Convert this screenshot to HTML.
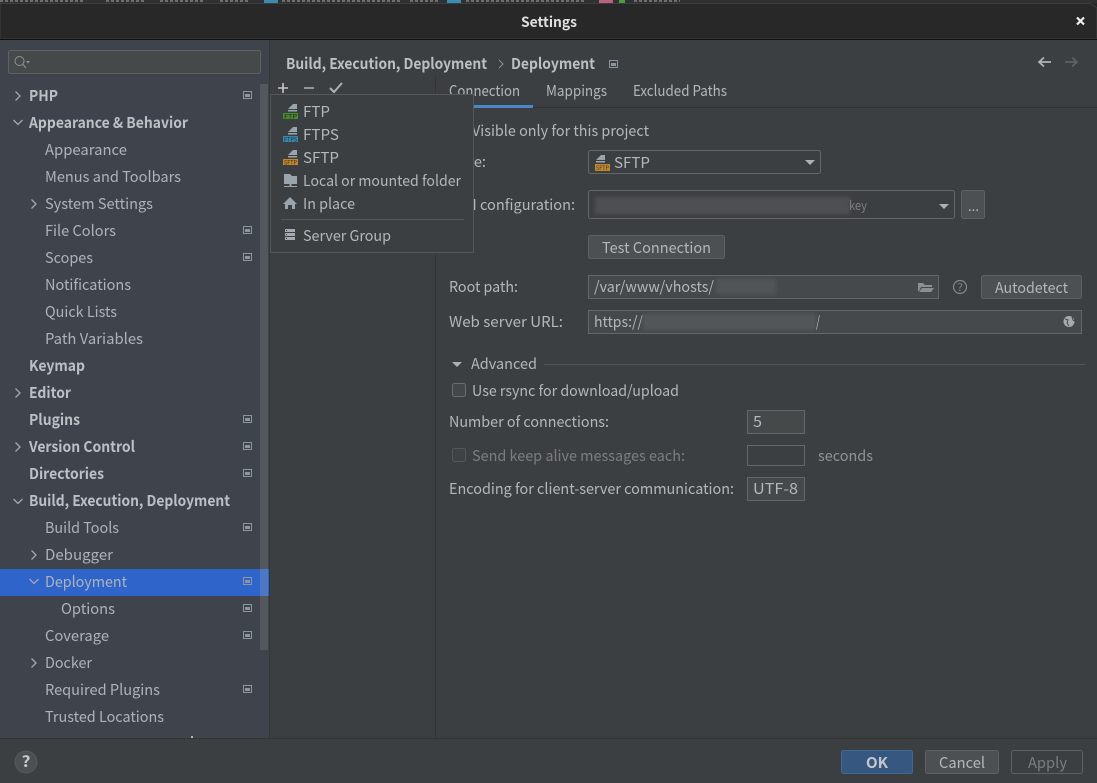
<!DOCTYPE html>
<html><head><meta charset="utf-8"><title>Settings</title>
<style>
html,body{margin:0;padding:0;background:#3c3f41;width:1097px;height:783px;overflow:hidden}
svg{display:block}
text{font-family:"Noto Sans CJK JP","Liberation Sans",sans-serif;font-size:15px;fill:#b4b7ba}
.b{font-weight:700;fill:#bcc0c5}
.d{fill:#7b7e81}
.s{fill:#adb3ba}
</style></head><body>
<svg width="1097" height="783" viewBox="0 0 1097 783" xmlns="http://www.w3.org/2000/svg">
<defs>
<filter id="bl" x="-10%" y="-40%" width="120%" height="180%"><feGaussianBlur stdDeviation="1.8"/></filter>
<g id="pi"><rect x="0.5" y="0.5" width="8" height="7" fill="none" stroke="#8c96a0"/><rect x="2" y="3" width="5" height="3" fill="#8c96a0"/></g>
<path id="cr" d="M-2.5 -4.5L2 0L-2.5 4.5" fill="none" stroke="#a4a9ae" stroke-width="1.3"/>
<path id="cd" d="M-4.5 -2L0 2.5L4.5 -2" fill="none" stroke="#a4a9ae" stroke-width="1.3"/>
<path id="srv" d="M10 8L15 3H19V8ZM10 9H19V10.500H10Z" fill="#9aa4ad"/>
</defs>

<rect width="1097" height="783" fill="#3c3f41"/>
<!-- title -->
<rect width="1097" height="39" fill="#282828"/>
<rect x="0" y="0" width="1097" height="3" fill="#2f3133"/>
<g stroke="#86837c" stroke-width="2" stroke-dasharray="3 2" opacity=".75" fill="none"><path d="M0 1H85M106 1H146M160 1H205M220 1H250M282 1H402M410 1H440M466 1H584M634 1H680"/></g>
<rect x="264" y="0" width="14" height="3" fill="#3d8ab0"/><rect x="447" y="0" width="14" height="3" fill="#3d8ab0"/><rect x="599" y="0" width="14" height="3" fill="#b9637c"/><rect x="619" y="0" width="6" height="3" fill="#4f9a45"/>
<path d="M0 3.500H1090L1097 8V39H0Z" fill="#282828" stroke="#3e3e3e" stroke-width="1"/>
<rect y="39" width="1097" height="1" fill="#0f0f0f"/>
<text class="b" x="521" y="27" textLength="56" lengthAdjust="spacingAndGlyphs" style="fill:#e0e0e0;font-size:14px">Settings</text>
<path d="M1077 17.500L1084 24.500M1084 17.500L1077 24.500" stroke="#f0f0f0" stroke-width="2.200"/>

<!-- sidebar -->
<rect x="0" y="40" width="269" height="698" fill="#3f444c"/>
<rect x="269" y="40" width="1" height="698" fill="#34373a"/>
<rect x="8.500" y="50.500" width="252" height="23" rx="2" fill="#45494a" stroke="#5f6264"/>
<circle cx="19.500" cy="61" r="4.500" fill="none" stroke="#8d9298" stroke-width="1"/>
<path d="M23 64.500L26 68" stroke="#8d9298" stroke-width="1.200"/><path d="M26 61H30L28 63.500Z" fill="#8d9298"/>
<rect x="260" y="84" width="8" height="566" fill="#53585f"/>
<rect x="0" y="569" width="269" height="27" fill="#2f65ca"/>
<rect x="260" y="569" width="8" height="27" fill="#4e77c4"/>

<g transform="translate(0,1)">
<text class="b" x="29" y="100" textLength="29" lengthAdjust="spacingAndGlyphs">PHP</text>
<text class="b" x="29" y="127" textLength="159" lengthAdjust="spacingAndGlyphs">Appearance &amp; Behavior</text>
<text class="s" x="45" y="154" textLength="82" lengthAdjust="spacingAndGlyphs">Appearance</text>
<text class="s" x="45" y="181" textLength="136" lengthAdjust="spacingAndGlyphs">Menus and Toolbars</text>
<text class="s" x="45" y="208" textLength="108" lengthAdjust="spacingAndGlyphs">System Settings</text>
<text class="s" x="45" y="235" textLength="71" lengthAdjust="spacingAndGlyphs">File Colors</text>
<text class="s" x="45" y="262" textLength="48" lengthAdjust="spacingAndGlyphs">Scopes</text>
<text class="s" x="45" y="289" textLength="86" lengthAdjust="spacingAndGlyphs">Notifications</text>
<text class="s" x="45" y="316" textLength="72" lengthAdjust="spacingAndGlyphs">Quick Lists</text>
<text class="s" x="45" y="343" textLength="98" lengthAdjust="spacingAndGlyphs">Path Variables</text>
<text class="b" x="29" y="370" textLength="56" lengthAdjust="spacingAndGlyphs">Keymap</text>
<text class="b" x="29" y="397" textLength="42" lengthAdjust="spacingAndGlyphs">Editor</text>
<text class="b" x="29" y="424" textLength="51" lengthAdjust="spacingAndGlyphs">Plugins</text>
<text class="b" x="29" y="451" textLength="106" lengthAdjust="spacingAndGlyphs">Version Control</text>
<text class="b" x="29" y="478" textLength="75" lengthAdjust="spacingAndGlyphs">Directories</text>
<text class="b" x="29" y="505" textLength="201" lengthAdjust="spacingAndGlyphs">Build, Execution, Deployment</text>
<text class="s" x="45" y="532" textLength="74" lengthAdjust="spacingAndGlyphs">Build Tools</text>
<text class="s" x="45" y="559" textLength="68" lengthAdjust="spacingAndGlyphs">Debugger</text>
<text class="s" x="45" y="586" textLength="82" lengthAdjust="spacingAndGlyphs">Deployment</text>
<text class="s" x="61" y="613" textLength="54" lengthAdjust="spacingAndGlyphs">Options</text>
<text class="s" x="45" y="640" textLength="64" lengthAdjust="spacingAndGlyphs">Coverage</text>
<text class="s" x="45" y="667" textLength="47" lengthAdjust="spacingAndGlyphs">Docker</text>
<text class="s" x="45" y="694" textLength="115" lengthAdjust="spacingAndGlyphs">Required Plugins</text>
<text class="s" x="45" y="721" textLength="119" lengthAdjust="spacingAndGlyphs">Trusted Locations</text>
</g>
<rect x="191" y="736" width="2" height="2" fill="#b4b7ba"/>

<use href="#cr" x="18" y="96"/><use href="#cd" x="18" y="122"/><use href="#cr" x="34" y="204"/>
<use href="#cr" x="18" y="393"/><use href="#cr" x="18" y="447"/><use href="#cd" x="18" y="501"/>
<use href="#cr" x="34" y="555"/><use href="#cd" x="34" y="581"/><use href="#cr" x="34" y="663"/>
<g><use href="#pi" x="243" y="91"/><use href="#pi" x="243" y="226"/><use href="#pi" x="243" y="253"/><use href="#pi" x="243" y="415"/><use href="#pi" x="243" y="442"/><use href="#pi" x="243" y="469"/><use href="#pi" x="243" y="523"/><use href="#pi" x="243" y="577"/><use href="#pi" x="243" y="604"/><use href="#pi" x="243" y="631"/><use href="#pi" x="243" y="685"/></g>

<!-- header -->
<text class="b" x="286" y="69" textLength="201" lengthAdjust="spacingAndGlyphs">Build, Execution, Deployment</text>
<path d="M499 60L503 64L499 68" fill="none" stroke="#8e9194" stroke-width="1"/>
<text class="b" x="511" y="69" textLength="84" lengthAdjust="spacingAndGlyphs">Deployment</text>
<use href="#pi" x="609" y="60"/>
<path d="M1051 62H1039M1044 57.500L1039 62L1044 66.500" fill="none" stroke="#b0b3b6" stroke-width="1.800"/>
<path d="M1065 62H1077M1072 57.500L1077 62L1072 66.500" fill="none" stroke="#5e6163" stroke-width="1.800"/>

<!-- toolbar -->
<path d="M283 83V93M278 88H288" stroke="#c4c6c8" stroke-width="1.600"/>
<path d="M304 88H314" stroke="#a9acaf" stroke-width="1.600"/>
<path d="M330 88L334 92L342 83" fill="none" stroke="#aeb1b4" stroke-width="2"/>
<rect x="435" y="76" width="1" height="662" fill="#333537"/>

<!-- tabs -->
<text x="449" y="96" textLength="71" lengthAdjust="spacingAndGlyphs">Connection</text>
<text x="546" y="96" textLength="61" lengthAdjust="spacingAndGlyphs">Mappings</text>
<text x="633" y="96" textLength="94" lengthAdjust="spacingAndGlyphs">Excluded Paths</text>
<rect x="436" y="107" width="661" height="1" fill="#323537"/>
<rect x="436" y="105" width="97" height="3" fill="#4a88c7"/>

<!-- form -->
<text x="472" y="136" textLength="177" lengthAdjust="spacingAndGlyphs">Visible only for this project</text>
<text x="449" y="167" textLength="37" lengthAdjust="spacingAndGlyphs">Type:</text>
<rect x="588.500" y="150.500" width="232" height="23" rx="2" fill="#3c3f41" stroke="#646668"/>
<use href="#srv" x="586" y="152"/>
<rect x="595" y="164" width="15" height="7" fill="#c2872c"/>
<text x="596" y="170" textLength="13" lengthAdjust="spacingAndGlyphs" style="font-size:6px;fill:#3c3f41">SFTP</text>
<text x="614" y="168" textLength="36" lengthAdjust="spacingAndGlyphs">SFTP</text>
<path d="M805 160H815L810 165Z" fill="#aeb1b4"/>

<text x="449" y="210" textLength="126" lengthAdjust="spacingAndGlyphs">SSH configuration:</text>
<rect x="588.500" y="190.500" width="366" height="28" rx="2" fill="#3c3f41" stroke="#646668"/>
<rect x="595" y="197" width="255" height="17" fill="#4e5052" filter="url(#bl)"/>
<text class="d" x="849" y="210" textLength="18" lengthAdjust="spacingAndGlyphs" style="font-size:13px">key</text>
<path d="M939 204H949L944 209Z" fill="#aeb1b4"/>
<rect x="961.500" y="190.500" width="23" height="28" rx="2" fill="#4c5052" stroke="#5e6163"/>
<text x="968" y="211" textLength="11" lengthAdjust="spacingAndGlyphs" style="font-size:13px">...</text>

<rect x="588.500" y="235.500" width="136" height="23" rx="2" fill="#4c5052" stroke="#5e6163"/>
<text x="602" y="253" textLength="109" lengthAdjust="spacingAndGlyphs">Test Connection</text>

<text x="449" y="292" textLength="69" lengthAdjust="spacingAndGlyphs">Root path:</text>
<rect x="588.500" y="275.500" width="350" height="23" fill="#45494a" stroke="#646668"/>
<text x="594" y="292" textLength="120" lengthAdjust="spacingAndGlyphs">/var/www/vhosts/</text>
<rect x="716" y="279" width="60" height="15" fill="#515456" filter="url(#bl)"/>
<path d="M918 291V283H923L925 285H932V287H921L919 291ZM919 292L922 288H934L931 292Z" fill="#8b8f92"/>
<circle cx="960" cy="287" r="6.500" fill="none" stroke="#85888b" stroke-width="1.200"/>
<text x="957" y="291" textLength="6" lengthAdjust="spacingAndGlyphs" style="font-size:10px;fill:#85888b">?</text>
<rect x="981.500" y="275.500" width="100" height="23" rx="2" fill="#4c5052" stroke="#5e6163"/>
<text x="995" y="293" textLength="73" lengthAdjust="spacingAndGlyphs">Autodetect</text>

<text x="449" y="327" textLength="114" lengthAdjust="spacingAndGlyphs">Web server URL:</text>
<rect x="588.500" y="310.500" width="493" height="23" fill="#45494a" stroke="#646668"/>
<text x="594" y="327" textLength="49" lengthAdjust="spacingAndGlyphs">https://</text>
<rect x="643" y="314" width="173" height="16" fill="#535658" filter="url(#bl)"/>
<text x="816" y="327" textLength="4" lengthAdjust="spacingAndGlyphs">/</text>
<circle cx="1069" cy="321.500" r="5.500" fill="#a7aaad"/>
<path d="M1065 319L1068 320L1067 323L1069 326M1072 317L1073 320L1075 321" fill="none" stroke="#45494a" stroke-width="1"/>

<path d="M452 362H462L457 367Z" fill="#aeb1b4"/>
<text x="471" y="369" textLength="66" lengthAdjust="spacingAndGlyphs">Advanced</text>
<rect x="544" y="364" width="541" height="1" fill="#54575a"/>
<rect x="452.500" y="383.500" width="13" height="13" rx="2" fill="#43474a" stroke="#6a6d70"/>
<text x="472" y="396" textLength="207" lengthAdjust="spacingAndGlyphs">Use rsync for download/upload</text>
<text x="449" y="427" textLength="160" lengthAdjust="spacingAndGlyphs">Number of connections:</text>
<rect x="747.500" y="410.500" width="57" height="23" fill="#45494a" stroke="#646668"/>
<text x="753" y="427" textLength="9" lengthAdjust="spacingAndGlyphs">5</text>
<rect x="452.500" y="448.500" width="13" height="13" rx="2" fill="#3f4244" stroke="#55585a"/>
<text class="d" x="472" y="461" textLength="213" lengthAdjust="spacingAndGlyphs">Send keep alive messages each:</text>
<rect x="747.500" y="445.500" width="57" height="20" fill="#3c3f41" stroke="#646668"/>
<text class="d" style="fill:#909396" x="818" y="461" textLength="55" lengthAdjust="spacingAndGlyphs">seconds</text>
<text x="449" y="494" textLength="285" lengthAdjust="spacingAndGlyphs">Encoding for client-server communication:</text>
<rect x="747.500" y="477.500" width="57" height="23" fill="#45494a" stroke="#646668"/>
<text x="753" y="494" textLength="45" lengthAdjust="spacingAndGlyphs">UTF-8</text>

<!-- popup -->
<rect x="270.500" y="94.500" width="203" height="158" fill="#3c3f41" stroke="#555759"/>
<use href="#srv" x="278" y="101"/><rect x="283" y="113" width="15" height="6" fill="#4a8a2e"/>
<text x="284" y="118.500" textLength="13" lengthAdjust="spacingAndGlyphs" style="font-size:6px;fill:#202a1c">FTP</text>
<use href="#srv" x="278" y="124"/><rect x="283" y="136" width="15" height="6" fill="#3a86a8"/>
<text x="284" y="141.500" textLength="13" lengthAdjust="spacingAndGlyphs" style="font-size:6px;fill:#1d3540">FTPS</text>
<use href="#srv" x="278" y="147"/><rect x="283" y="159" width="15" height="6" fill="#c2872c"/>
<text x="284" y="164.500" textLength="13" lengthAdjust="spacingAndGlyphs" style="font-size:6px;fill:#3c3020">SFTP</text>
<path d="M284 174H290L292 176H297V184H291.500V186H297V187H284V186H289.500V184H284Z" fill="#9aa4ad"/>
<path d="M283 204L290 197L297 204H295V209H292V205H288V209H285V204Z" fill="#9aa4ad"/>
<g fill="#a5abb1"><rect x="285" y="229" width="10" height="3"/><rect x="285" y="233" width="10" height="3"/><rect x="285" y="237" width="10" height="3"/></g>
<g fill="#3c3f41"><rect x="286" y="230" width="1" height="1"/><rect x="286" y="234" width="1" height="1"/><rect x="286" y="238" width="1" height="1"/></g>
<text x="303" y="117" textLength="27" lengthAdjust="spacingAndGlyphs">FTP</text>
<text x="303" y="140" textLength="36" lengthAdjust="spacingAndGlyphs">FTPS</text>
<text x="303" y="163" textLength="36" lengthAdjust="spacingAndGlyphs">SFTP</text>
<text x="303" y="186" textLength="158" lengthAdjust="spacingAndGlyphs">Local or mounted folder</text>
<text x="303" y="209" textLength="52" lengthAdjust="spacingAndGlyphs">In place</text>
<rect x="281" y="219" width="183" height="1" fill="#55585a"/>
<text x="303" y="241" textLength="88" lengthAdjust="spacingAndGlyphs">Server Group</text>

<!-- footer -->
<rect x="0" y="738" width="1097" height="1" fill="#323436"/>
<rect x="0" y="739" width="1097" height="44" fill="#3c3f41"/>
<circle cx="26" cy="762" r="11" fill="#4c5052" stroke="#56595b"/>
<text class="b" x="21.500" y="767" textLength="9" lengthAdjust="spacingAndGlyphs" style="fill:#c8cacc">?</text>
<rect x="841.500" y="750.500" width="71" height="23" rx="2" fill="#365880" stroke="#43688f"/>
<text class="b" x="866" y="768" textLength="22" lengthAdjust="spacingAndGlyphs" style="fill:#c4c8cc">OK</text>
<rect x="925.500" y="750.500" width="73" height="23" rx="2" fill="#4c5052" stroke="#5e6163"/>
<text x="939" y="768" textLength="46" lengthAdjust="spacingAndGlyphs">Cancel</text>
<rect x="1011.500" y="750.500" width="71" height="23" rx="2" fill="#3c3f41" stroke="#5e6163"/>
<text class="d" x="1028" y="768" textLength="39" lengthAdjust="spacingAndGlyphs">Apply</text>
</svg>
</body></html>
